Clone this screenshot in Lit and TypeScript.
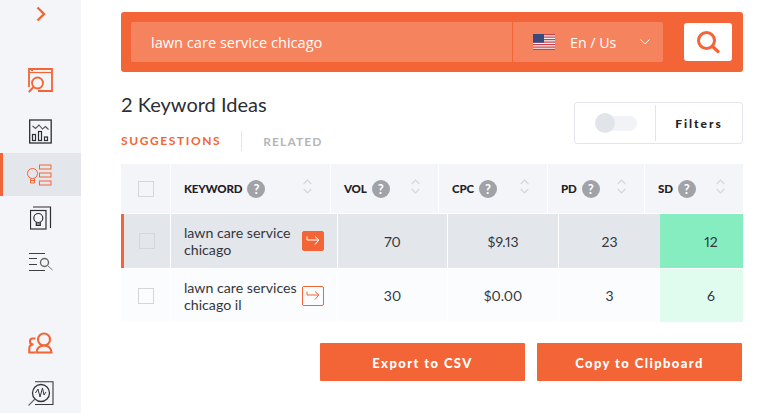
import { LitElement, html, css } from "lit";
import { customElement } from "lit/decorators.js";

const O = "#f36436";
const D = "#2b2e33";

const icons = {
  chevron: html`<svg width="12" height="16" viewBox="0 0 12 16"><path d="M2.500 1.500 9 8l-6.500 6.500" fill="none" stroke=${O} stroke-width="2.400"/></svg>`,
  browser: html`<svg width="26" height="26" viewBox="0 0 26 26" fill="none" stroke=${O}><path d="M1 20V2h23v22H10" stroke-width="1.800"/><path d="M1 5.500h23" stroke-width="1.200"/><path d="M3 3.500h2" stroke-width="1"/><circle cx="9.500" cy="16" r="5.500" stroke-width="1.800"/><path d="M5.500 20 .8 25" stroke-width="2"/></svg>`,
  chart: html`<svg width="24" height="25" viewBox="0 0 24 25" fill="none" stroke=${D}><rect x=".7" y="1" width="21.500" height="23" stroke-width="1.300"/><path d="m3.500 7 3 2.500 3.500-3.500 3.500 4 3-2.500 3 3" stroke="#555" stroke-width="1.100"/><rect x="3.500" y="15.500" width="3" height="6" stroke-width="1.200"/><rect x="9.500" y="12.500" width="3" height="9" stroke-width="1.200"/><rect x="15.500" y="18" width="3" height="3.500" stroke-width="1.200"/></svg>`,
  bulbList: html`<svg width="26" height="22" viewBox="0 0 26 22" fill="none" stroke=${O} stroke-width="1"><circle cx="5.500" cy="9.500" r="5"/><path d="M3.500 14.500v4.500h4v-4.500M3.500 16.500h4"/><rect x="12.500" y="1" width="11.500" height="4"/><rect x="12.500" y="9" width="11.500" height="4"/><rect x="12.500" y="17" width="11.500" height="4"/></svg>`,
  bulbCard: html`<svg width="22" height="24" viewBox="0 0 22 24" fill="none" stroke=${D} stroke-width="1.200"><path d="M3 1h17.500v21"/><rect x=".5" y="4.500" width="15.500" height="18.500"/><circle cx="8.300" cy="12" r="4.500"/><path d="M6.300 16v3.500h4V16M6.300 18h4"/></svg>`,
  listSearch: html`<svg width="24" height="20" viewBox="0 0 24 20" fill="none" stroke="#3c3f44"><path d="M0 2.500h16M0 7.500h8M0 13.500h8M0 19.500h16" stroke-width="1.100"/><circle cx="15.500" cy="11.500" r="4" stroke="#666" stroke-width="1.400"/><path d="m18.500 14.500 5 4.500" stroke="#777" stroke-width="1"/></svg>`,
  people: html`<svg width="25" height="22" viewBox="0 0 25 22" fill="none" stroke=${O} stroke-width="2.100"><circle cx="16" cy="7.500" r="6"/><path d="M8.500 20.500c0-4 3-7 7.500-7s7.500 3 7.500 7z"/><path d="M7.500 6.500h-3Q2 6.500 2 9.500t3.500 3Q1.300 12.500 1.300 16.500v4h6.200"/></svg>`,
  pulse: html`<svg width="26" height="25" viewBox="0 0 26 25" fill="none" stroke="#34373c"><path d="M7 .8h18V23.500H7" stroke-width="1.100"/><circle cx="13" cy="12" r="8.500" fill="#f4f5f8" stroke-width="1.300"/><path d="m7.500 12 2.500-4 2 8 2.500-9 1.500 7 2-3" stroke-width="1"/><path d="M7 18 .5 24.500" stroke="#666" stroke-width="1.100"/></svg>`,
};

const flag = html`<svg width="22" height="16" viewBox="0 0 22 16"><rect width="22" height="16" fill="#f6f2f2"/><g fill="#c7414b"><rect width="22" height="1.200"/><rect y="2.500" width="22" height="1.200"/><rect y="5" width="22" height="1.200"/><rect y="7.500" width="22" height="1.200"/><rect y="10" width="22" height="1.200"/><rect y="12.500" width="22" height="1.200"/><rect y="14.800" width="22" height="1.200"/></g><rect width="11" height="8.700" fill="#3b4a7c"/></svg>`;

const sortIcon = html`<svg class="sort" width="9" height="15" viewBox="0 0 9 15" fill="none" stroke="#d4d6da" stroke-width="1.200"><path d="m.7 5 3.800-4 3.800 4M.7 10l3.800 4 3.800-4"/></svg>`;

const arrow = (c: string) => html`<svg width="14" height="10" viewBox="0 0 14 10" fill="none" stroke=${c} stroke-width="1"><path d="M1 .5V4h11.500M9 .5 12.800 4 9 8.500"/></svg>`;

const columns = ["KEYWORD", "VOL", "CPC", "PD", "SD"];

const rows = [
  { kw: ["lawn care service", "chicago"], vol: "70", cpc: "$9.13", pd: "23", sd: "12", active: true },
  { kw: ["lawn care services", "chicago il"], vol: "30", cpc: "$0.00", pd: "3", sd: "6", active: false },
];

@customElement("app-root")
export class AppRoot extends LitElement {
  static styles = css`
    :host {
      display: grid;
      grid-template-columns: 81px 1fr;
      width: 761px;
      height: 413px;
      overflow: hidden;
      background: #fff;
      font-family: Lato, "Open Sans", sans-serif;
      color: #33363b;
    }
    .side {
      background: #f4f5f8;
      display: flex;
      flex-direction: column;
      height: 413px;
      overflow: hidden;
    }
    .item {
      height: 43px;
      flex: none;
      display: flex;
      align-items: center;
      justify-content: center;
      box-sizing: border-box;
    }
    .item svg { display: block; }
    .top { height: 28px; margin-bottom: 30px; }
    .second { margin-top: 9px; }
    .active {
      background: #e3e6eb;
      border-left: 3px solid #f36436;
      justify-content: flex-start;
      padding-left: 24px;
    }
    .gap { margin-top: 39px; }
    .gap2 { margin-top: 8px; }
    .main { padding: 12px 18px 0 40px; }
    .search {
      height: 60px;
      box-sizing: border-box;
      background: #f36436;
      border-radius: 3px;
      padding: 10px 11px 10px 10px;
      display: flex;
      align-items: center;
    }
    .query {
      width: 381px;
      height: 40px;
      box-sizing: border-box;
      background: #f5835e;
      border-radius: 2px 0 0 2px;
      padding-left: 20px;
      display: flex;
      align-items: center;
      color: #fff;
      font-family: "Open Sans", sans-serif;
      font-size: 14.6px;
    }
    .lang {
      width: 150px;
      height: 40px;
      margin-left: 1px;
      background: #f5835e;
      border-radius: 0 2px 2px 0;
      display: flex;
      align-items: center;
      color: #fff;
      font-family: "Open Sans", sans-serif;
      font-size: 14.2px;
      padding-left: 20px;
      box-sizing: border-box;
    }
    .lang .txt { margin-left: 15px; }
    .lang .caret { margin-left: 24px; display: block; }
    .go {
      margin-left: auto;
      width: 48px;
      height: 38px;
      background: #fff;
      border-radius: 3px;
      display: flex;
      align-items: center;
      justify-content: center;
    }
    .head {
      display: flex;
      justify-content: space-between;
      height: 92px;
    }
    h1 {
      margin: 19px 0 0;
      font-size: 20px;
      line-height: 26px;
      font-weight: 400;
      color: #2b2e33;
    }
    .tabs {
      display: flex;
      align-items: center;
      margin-top: 14px;
      height: 20px;
      font-size: 12px;
      font-weight: 700;
      letter-spacing: 1.600px;
      color: #b4b6ba;
    }
    .tabs .on { color: #f36436; padding-right: 20px; border-right: 1px solid #e3e5e9; line-height: 20px; }
    .tabs .off { padding-left: 21px; letter-spacing: 1.100px; }
    .filters {
      margin-top: 30px;
      width: 169px;
      height: 42px;
      box-sizing: border-box;
      border: 1px solid #e3e5ea;
      border-radius: 3px;
      display: flex;
      align-items: center;
    }
    .toggleBox {
      width: 81px;
      height: 36px;
      border-right: 1px solid #e3e5ea;
      display: flex;
      align-items: center;
      padding-left: 20px;
      box-sizing: border-box;
    }
    .track {
      width: 42px;
      height: 15px;
      border-radius: 8px;
      background: #f2f3f6;
      display: flex;
      align-items: center;
    }
    .knob { width: 20px; height: 20px; border-radius: 50%; background: #e1e5ea; }
    .fl {
      flex: 1;
      text-align: center;
      font-size: 12px;
      font-weight: 900;
      letter-spacing: 2px;
      color: #1f2226;
    }
    .thead, .trow { display: grid; column-gap: 1px; }
    .thead {
      grid-template-columns: 49px 159px 107px 108px 96px 98px;
      height: 49px;
      margin-bottom: 1px;
    }
    .th {
      background: #f4f5f8;
      display: flex;
      align-items: center;
      padding-left: 13px;
      font-size: 11.5px;
      letter-spacing: -0.2px;
      font-weight: 900;
      color: #1f2226;
      position: relative;
    }
    .th.box, .td.box { padding: 0; justify-content: center; }
    .th .q {
      margin-left: 5px;
      width: 18px;
      height: 18px;
      border-radius: 50%;
      background: #a0a2a8;
      color: #fff;
      font-size: 13px;
      font-weight: 700;
      display: flex;
      align-items: center;
      justify-content: center;
    }
    .th .sort { position: absolute; top: 15px; right: 18px; }
    .check {
      width: 16px;
      height: 16px;
      box-sizing: border-box;
      border: 1px solid #d4d6da;
      background: transparent;
    }
    .trow {
      grid-template-columns: 49px 166px 109px 110px 101px 82px;
      margin-bottom: 1px;
    }
    .r1 { height: 54px; }
    .r2 { height: 53px; }
    .td {
      display: flex;
      align-items: center;
      justify-content: center;
      font-size: 14px;
      font-variant-numeric: proportional-nums;
      background: #fbfcfe;
      color: #33363b;
    }
    .r1 .td { background: #e3e6eb; }
    .r1 .first { border-left: 3px solid #f36436; }
    .r1 .td.sd { background: #85edbf; }
    .r2 .td.sd { background: #e0fcee; }
    .td.sd { margin-left: -1px; padding-left: 19px; }
    .td.kwc {
      justify-content: space-between;
      padding: 0 13px;
      line-height: 17px;
      font-size: 14.2px;
    }
    .jump {
      width: 22px;
      height: 20px;
      box-sizing: border-box;
      border: 1px solid #f36436;
      border-radius: 2px;
      display: flex;
      align-items: center;
      justify-content: center;
      flex: none;
    }
    .jump.fill { background: #f36436; }
    .actions {
      display: flex;
      justify-content: flex-end;
      gap: 12px;
      margin-top: 21px;
      padding-right: 1px;
    }
    .btn {
      width: 205px;
      height: 38px;
      box-sizing: border-box;
      padding-top: 1px;
      border-radius: 1px;
      background: #f36436;
      color: #fff;
      display: flex;
      align-items: center;
      justify-content: center;
      font-size: 13px;
      font-weight: 900;
      letter-spacing: 1.400px;
    }
  `;

  render() {
    return html`
      <nav class="side">
        <div class="item top">${icons.chevron}</div>
        <div class="item">${icons.browser}</div>
        <div class="item second">${icons.chart}</div>
        <div class="item active">${icons.bulbList}</div>
        <div class="item">${icons.bulbCard}</div>
        <div class="item">${icons.listSearch}</div>
        <div class="item gap">${icons.people}</div>
        <div class="item gap2">${icons.pulse}</div>
      </nav>
      <main class="main">
        <div class="search">
          <div class="query">lawn care service chicago</div>
          <div class="lang">
            ${flag}
            <span class="txt">En / Us</span>
            <svg class="caret" width="10" height="6" viewBox="0 0 10 6" fill="none" stroke="#fff" stroke-width="1"><path d="m.5.500 4.500 4.500L9.500.500"/></svg>
          </div>
          <div class="go">
            <svg width="24" height="24" viewBox="0 0 24 24" fill="none" stroke=${O}><circle cx="10.500" cy="10.500" r="8" stroke-width="3"/><path d="m16.500 16.500 5.500 5" stroke-width="3.200" stroke-linecap="round"/></svg>
          </div>
        </div>
        <div class="head">
          <div>
            <h1>2 Keyword Ideas</h1>
            <div class="tabs"><span class="on">SUGGESTIONS</span><span class="off">RELATED</span></div>
          </div>
          <div class="filters">
            <div class="toggleBox"><div class="track"><div class="knob"></div></div></div>
            <div class="fl">Filters</div>
          </div>
        </div>
        <div class="thead">
          <div class="th box"><div class="check"></div></div>
          ${columns.map((c) => html`<div class="th">${c}<span class="q">?</span>${sortIcon}</div>`)}
        </div>
        ${rows.map(
          (r) => html`
            <div class="trow ${r.active ? "r1" : "r2"}">
              <div class="td box first"><div class="check"></div></div>
              <div class="td kwc">
                <div>${r.kw[0]}<br />${r.kw[1]}</div>
                <div class="jump ${r.active ? "fill" : ""}">${arrow(r.active ? "#fff" : O)}</div>
              </div>
              <div class="td">${r.vol}</div>
              <div class="td">${r.cpc}</div>
              <div class="td">${r.pd}</div>
              <div class="td sd">${r.sd}</div>
            </div>
          `
        )}
        <div class="actions">
          <div class="btn">Export to CSV</div>
          <div class="btn">Copy to Clipboard</div>
        </div>
      </main>
    `;
  }
}
